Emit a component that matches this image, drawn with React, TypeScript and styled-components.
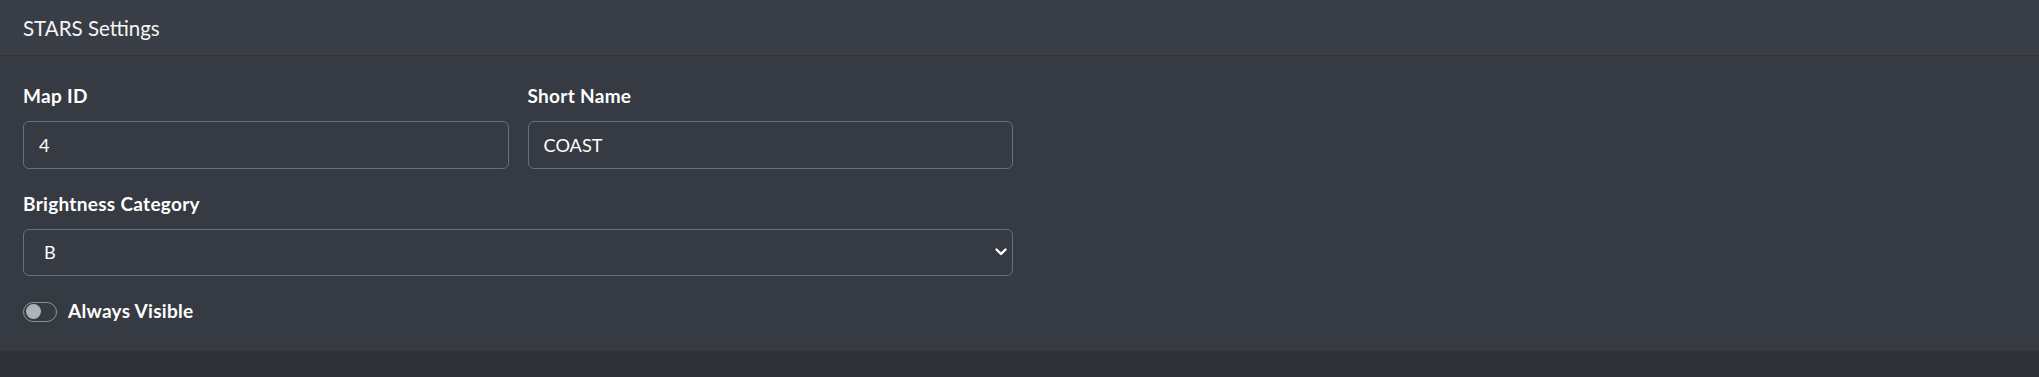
import React from "react";
import styled, { createGlobalStyle } from "styled-components";

const GlobalStyle = createGlobalStyle`
  html, body {
    margin: 0;
    padding: 0;
    background: #2f3337;
  }
  body {
    font-family: Lato, "Open Sans", "Liberation Sans", sans-serif;
    color: #ffffff;
  }
  * { box-sizing: border-box; }
`;

const Card = styled.section`
  background: #363a42;
  width: 100%;
`;

const CardHeader = styled.header`
  height: 56px;
  padding: 0 23px;
  display: flex;
  align-items: center;
  background: #393d45;
  border-bottom: 1px solid #2f3338;
  font-size: 20.5px;
  font-weight: 400;
  color: #f4f5f6;
`;

const CardBody = styled.div`
  padding: 25px 23px 25px;
`;

const Form = styled.form`
  width: 990px;
  display: flex;
  flex-direction: column;
`;

const Row = styled.div<{ $cols: number }>`
  display: grid;
  grid-template-columns: repeat(${(p) => p.$cols}, 1fr);
  column-gap: 19px;
  margin-bottom: 20px;
`;

const Field = styled.div`
  display: flex;
  flex-direction: column;
`;

const Label = styled.label`
  display: block;
  font-size: 19px;
  letter-spacing: 0.3px;
  line-height: 30px;
  font-weight: 700;
  color: #ffffff;
  margin-bottom: 10px;
`;

const TextInput = styled.input`
  height: 47.5px;
  width: 100%;
  padding: 0 15px;
  background: transparent;
  border: 1px solid #6a6e76;
  border-radius: 6px;
  color: #ffffff;
  font-family: inherit;
  font-size: 18.2px;
  outline: none;
`;

const SelectWrap = styled.div`
  position: relative;
  width: 100%;
`;

const Select = styled.select`
  appearance: none;
  -webkit-appearance: none;
  height: 47px;
  width: 100%;
  padding: 0 36px 0 20px;
  background: transparent;
  border: 1px solid #6a6e76;
  border-radius: 6px;
  color: #ffffff;
  font-family: inherit;
  font-size: 18.2px;
  outline: none;
  color-scheme: dark;
`;

const Chevron = styled.svg`
  position: absolute;
  right: 6px;
  top: 50%;
  width: 12px;
  height: 8px;
  transform: translateY(-50%);
  pointer-events: none;
`;

const CheckRow = styled.div`
  display: flex;
  align-items: center;
  height: 30px;
`;

const Switch = styled.span<{ $on: boolean }>`
  width: 34px;
  height: 20px;
  border-radius: 10px;
  border: 1px solid #8d9299;
  background: ${(p) => (p.$on ? "#0d6efd" : "transparent")};
  display: flex;
  align-items: center;
  padding: 0 2px;
  justify-content: ${(p) => (p.$on ? "flex-end" : "flex-start")};
  flex-shrink: 0;
  margin-top: 2px;
`;

const Knob = styled.span`
  width: 15px;
  height: 15px;
  border-radius: 50%;
  background: #aeb3ba;
`;

const CheckLabel = styled.label`
  margin-left: 11px;
  font-size: 19px;
  letter-spacing: 0.3px;
  font-weight: 700;
  line-height: 30px;
  color: #ffffff;
`;

export default function App() {
  return (
    <>
      <GlobalStyle />
      <Card>
        <CardHeader>STARS Settings</CardHeader>
        <CardBody>
          <Form onSubmit={(e) => e.preventDefault()}>
            <Row $cols={2}>
              <Field>
                <Label htmlFor="mapId">Map ID</Label>
                <TextInput id="mapId" defaultValue="4" />
              </Field>
              <Field>
                <Label htmlFor="shortName">Short Name</Label>
                <TextInput id="shortName" defaultValue="COAST" />
              </Field>
            </Row>
            <Row $cols={1}>
              <Field>
                <Label htmlFor="brightness">Brightness Category</Label>
                <SelectWrap>
                  <Select id="brightness" defaultValue="B">
                    <option value="A">A</option>
                    <option value="B">B</option>
                  </Select>
                  <Chevron viewBox="0 0 12 8" fill="none">
                    <path
                      d="M1.5 1.5 L6 6 L10.5 1.5"
                      stroke="#ffffff"
                      strokeWidth="2.4"
                      strokeLinecap="round"
                      strokeLinejoin="round"
                    />
                  </Chevron>
                </SelectWrap>
              </Field>
            </Row>
            <CheckRow>
              <Switch $on={false} role="switch" aria-checked="false">
                <Knob />
              </Switch>
              <CheckLabel>Always Visible</CheckLabel>
            </CheckRow>
          </Form>
        </CardBody>
      </Card>
    </>
  );
}
